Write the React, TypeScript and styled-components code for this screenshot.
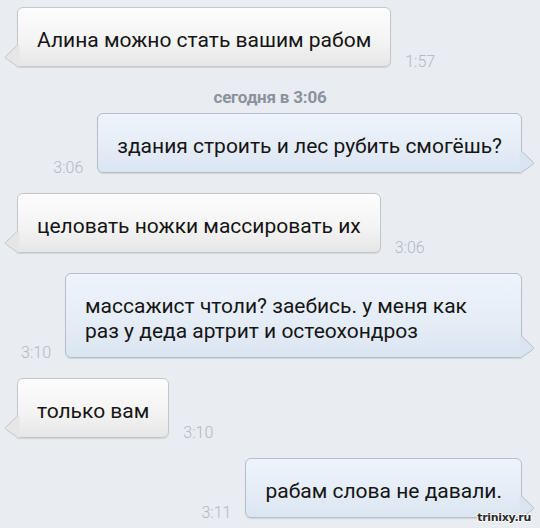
import React from 'react';
import styled, { createGlobalStyle } from 'styled-components';

const GlobalStyle = createGlobalStyle`
  html, body {
    margin: 0;
    padding: 0;
    background: #e9ecf1;
  }
`;

const Screen = styled.div`
  position: relative;
  width: 540px;
  height: 528px;
  overflow: hidden;
  background: #e9ecf1;
  padding-top: 7px;
  box-sizing: border-box;
  font-family: Roboto, 'Noto Sans', sans-serif;
`;

const Row = styled.div<{ $out?: boolean }>`
  display: flex;
  align-items: flex-end;
  flex-direction: ${p => (p.$out ? 'row-reverse' : 'row')};
  padding: ${p => (p.$out ? '0 18px 0 0' : '0 0 0 17px')};
  margin-bottom: 20px;
`;

const Bubble = styled.div<{ $out?: boolean }>`
  position: relative;
  max-width: 417px;
  padding: 20px 19px 13px;
  font-size: 21px;
  line-height: 25px;
  color: #151515;
  border: 1px solid ${p => (p.$out ? '#b3bfcd' : '#c3c6ca')};
  border-radius: 6px;
  ${p => (p.$out ? 'border-bottom-right-radius: 0;' : 'border-bottom-left-radius: 0;')}
  background: ${p =>
    p.$out
      ? 'linear-gradient(to bottom, #eef4fb 0%, #e4ecf6 60%, #dbe5f1 100%)'
      : 'linear-gradient(to bottom, #fdfdfd 0%, #f3f3f3 60%, #e6e6e6 100%)'};
  box-shadow: 0 1px 1px rgba(0, 0, 0, 0.1);
`;

const Tail = styled.svg<{ $out?: boolean }>`
  position: absolute;
  bottom: -1px;
  ${p => (p.$out ? 'right: -14px; transform: scaleX(-1);' : 'left: -14px;')}
  width: 16px;
  height: 22px;
  overflow: visible;
`;

const Time = styled.div<{ $out?: boolean }>`
  font-size: 16px;
  font-weight: 300;
  line-height: 16px;
  color: #b3b8bf;
  margin: ${p => (p.$out ? '0 14px -3px 0' : '0 0 -3px 14px')};
  white-space: nowrap;
`;

const DayHeader = styled.div`
  text-align: center;
  font-size: 17px;
  font-weight: 700;
  line-height: 20px;
  letter-spacing: -0.2px;
  color: #8b929b;
  margin: 0 0 6px;
`;

const Watermark = styled.div`
  position: absolute;
  right: 9px;
  bottom: 4px;
  font-family: 'DejaVu Sans', sans-serif;
  font-size: 11px;
  font-weight: 700;
  letter-spacing: -0.3px;
  color: #2a2a2a;
  text-shadow: -1px 0 #fff, 1px 0 #fff, 0 -1px #fff, 0 1px #fff;
`;

const BubbleTail: React.FC<{ out?: boolean }> = ({ out }) => {
  const fill = out ? '#dbe5f1' : '#e6e6e6';
  const stroke = out ? '#b3bfcd' : '#c3c6ca';
  return (
    <Tail $out={out} viewBox="0 0 16 22">
      <path d="M13.5 0 L1.5 11.5 Q0.8 12.3 1.6 13 L13.5 21.5 L15.5 21.5 L15.5 0 Z" fill={fill} />
      <path
        d="M13.5 0 L1.5 11.5 Q0.8 12.3 1.6 13 L13.5 21.5"
        fill="none"
        stroke={stroke}
        strokeWidth="1"
        strokeLinejoin="round"
      />
    </Tail>
  );
};

interface Message {
  text: string;
  time: string;
  out?: boolean;
}

const Msg: React.FC<Message> = ({ text, time, out }) => (
  <Row $out={out}>
    <Bubble $out={out}>
      {text}
      <BubbleTail out={out} />
    </Bubble>
    <Time $out={out}>{time}</Time>
  </Row>
);

const messages: Message[] = [
  { text: 'здания строить и лес рубить смогёшь?', time: '3:06', out: true },
  { text: 'целовать ножки массировать их', time: '3:06' },
  { text: 'массажист чтоли? заебись. у меня как раз у деда артрит и остеохондроз', time: '3:10', out: true },
  { text: 'только вам', time: '3:10' },
  { text: 'рабам слова не давали.', time: '3:11', out: true },
];

const App: React.FC = () => {
  return (
    <>
      <GlobalStyle />
      <Screen>
        <Msg text="Алина можно стать вашим рабом" time="1:57" />
        <DayHeader>сегодня в 3:06</DayHeader>
        {messages.map((m, i) => (
          <Msg key={i} {...m} />
        ))}
        <Watermark>trinixy.ru</Watermark>
      </Screen>
    </>
  );
};

export default App;
